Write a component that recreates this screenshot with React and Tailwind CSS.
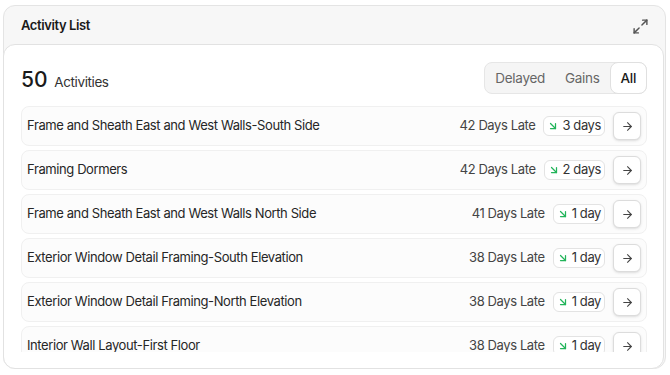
import React from "react";
import { Maximize2, ArrowRight, ArrowDownRight } from "lucide-react";

const rows = [
  { name: "Frame and Sheath East and West Walls-South Side", late: "42 Days Late", delta: "3 days" },
  { name: "Framing Dormers", late: "42 Days Late", delta: "2 days" },
  { name: "Frame and Sheath East and West Walls North Side", late: "41 Days Late", delta: "1 day" },
  { name: "Exterior Window Detail Framing-South Elevation", late: "38 Days Late", delta: "1 day" },
  { name: "Exterior Window Detail Framing-North Elevation", late: "38 Days Late", delta: "1 day" },
  { name: "Interior Wall Layout-First Floor", late: "38 Days Late", delta: "1 day" },
];

export default function App() {
  return (
    <div
      className="w-[670px] h-[375px] bg-white pt-[5px] pl-[3px] pr-[4px] overflow-hidden tracking-[-0.4px]"
      style={{ fontFamily: "Inter, 'Noto Sans', sans-serif" }}
    >
      <div className="h-[364px] rounded-xl border border-[#e4e4e4] bg-[#f7f7f7] flex flex-col">
        <div className="h-[38px] shrink-0 flex items-center justify-between pl-[17px] pr-[17px] pt-[2px]">
          <span className="text-[13px] font-semibold text-[#1a1a1a]">Activity List</span>
          <Maximize2 size={17} strokeWidth={2} className="text-[#555] -mr-[1px]" />
        </div>
        <div className="flex-1 -ml-px mr-[1px] -mb-px rounded-xl border border-[#e2e2e2] bg-white pl-[17px] pr-[16px] pt-[17px] flex flex-col">
          <div className="flex items-center justify-between h-[32px]">
            <div className="flex items-baseline gap-[7px] pt-[5px]">
              <span className="text-[21px] font-medium text-[#1a1a1a] leading-none tracking-[-0.1px]">50</span>
              <span className="text-[13.5px] text-[#333]">Activities</span>
            </div>
            <div className="flex items-center h-[32px] rounded-lg border border-[#e6e6e6] bg-[#f5f5f5] text-[13.5px] tracking-[-0.3px]">
              <span className="pl-[10px] pr-[10px] text-[#666]">Delayed</span>
              <span className="px-[10px] text-[#666]">Gains</span>
              <span className="h-[32px] -mr-px -my-px flex items-center px-[10px] rounded-lg border border-[#e0e0e0] bg-white text-[#1a1a1a] font-medium">All</span>
            </div>
          </div>
          <div className="mt-[12px] h-[246px] overflow-hidden flex flex-col gap-[4px]">
            {rows.map((r, i) => (
              <div
                key={i}
                className="h-[40px] shrink-0 flex items-center justify-between rounded-lg border border-[#f0f0f0] bg-[#fcfcfc] pl-[5px] pr-[5px]"
              >
                <span className="text-[13px] text-[#262626]">{r.name}</span>
                <div className="flex items-center">
                  <span className="text-[13px] text-[#444]">{r.late}</span>
                  <span className="ml-[8px] h-[20px] flex items-center gap-[3px] rounded-md border border-[#e3e3e3] bg-white pl-[3px] pr-[3px] text-[13px] text-[#333]">
                    <ArrowDownRight size={12} strokeWidth={2.5} className="text-[#22b45a]" />
                    {r.delta}
                  </span>
                  <span className="ml-[8px] w-[28px] h-[28px] flex items-center justify-center rounded-md border border-[#dcdcdc] bg-white shadow-sm">
                    <ArrowRight size={13} strokeWidth={2} className="text-[#444]" />
                  </span>
                </div>
              </div>
            ))}
          </div>
        </div>
      </div>
    </div>
  );
}
